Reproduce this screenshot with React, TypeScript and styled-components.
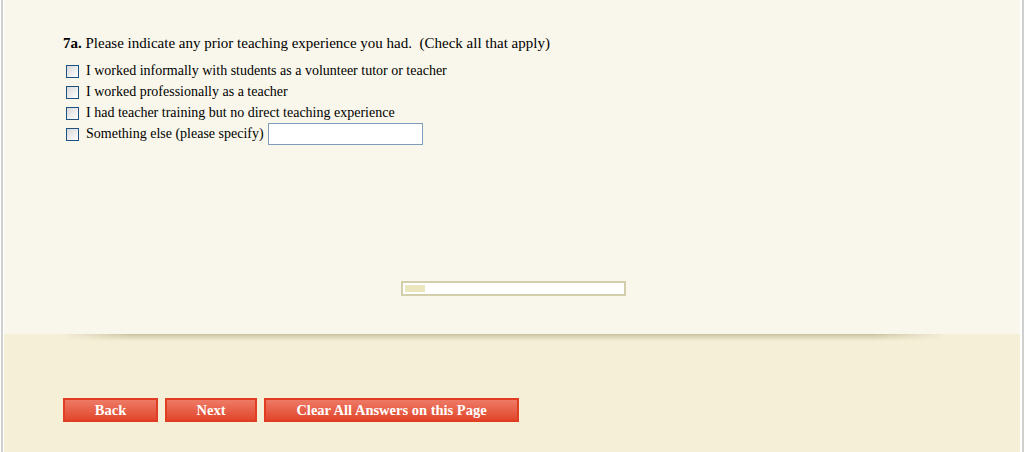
import styled, { createGlobalStyle } from "styled-components";

const GlobalStyle = createGlobalStyle`
    html, body {
        margin: 0;
        padding: 0;
        background: #ffffff;
    }
    body {
        font-family: "Liberation Serif", "Times New Roman", serif;
        color: #000000;
    }
`;

const Frame = styled.div`
    margin-left: 1px;
    width: 1016px;
    border-left: 2px solid #cfcfcf;
    border-right: 2px solid #cfcfcf;
    padding: 0 2px 0 1px;
    background: #ffffff;
    min-height: 452px;
`;

const QuestionArea = styled.div`
    background: #f9f7eb;
    height: 334px;
    padding: 35px 0 0 59px;
    box-sizing: border-box;
    display: flex;
    flex-direction: column;
`;

const Question = styled.div`
    font-size: 15px;
    line-height: 17px;
    margin-bottom: 11px;
    b {
        font-weight: bold;
    }
`;

const Options = styled.ul`
    list-style: none;
    margin: 0;
    padding: 0 0 0 3px;
    display: flex;
    flex-direction: column;
    gap: 5px;
`;

const Option = styled.li`
    display: flex;
    align-items: center;
    height: 16px;
    font-size: 14px;
`;

const Box = styled.span`
    width: 11px;
    height: 11px;
    border: 1px solid #1c5180;
    background: linear-gradient(135deg, #d8d8d8, #ffffff);
    margin-right: 7px;
    flex-shrink: 0;
`;

const SpecifyInput = styled.input`
    width: 151px;
    height: 18px;
    margin-left: 4px;
    border: 1px solid #7f9db9;
    background: #ffffff;
    padding: 1px;
    font: inherit;
`;

const Progress = styled.div`
    margin: 139px 0 0 338px;
    width: 217px;
    height: 7px;
    border: 2px solid #d3cfad;
    background: #ffffff;
    padding: 2px;
    box-sizing: content-box;
    display: flex;
`;

const ProgressFill = styled.div`
    height: 100%;
    background: #ece6c0;
`;

const ButtonArea = styled.div`
    background: #f5efd7;
    height: 118px;
    display: flex;
    flex-direction: column;
`;

const Shade = styled.div`
    height: 7px;
    margin: 0 76px 0 58px;
    background: linear-gradient(to bottom, rgba(160, 150, 110, 0.5), rgba(220, 210, 170, 0));
    -webkit-mask-image: linear-gradient(to right, transparent, #000 8%, #000 92%, transparent);
    mask-image: linear-gradient(to right, transparent, #000 8%, #000 92%, transparent);
`;

const ButtonRow = styled.div`
    display: flex;
    gap: 7px;
    padding: 57px 0 0 59px;
`;

const NavButton = styled.button<{ $width: number }>`
    width: ${(p) => p.$width}px;
    height: 24px;
    border: 2px solid #e03d22;
    background: linear-gradient(to bottom, #ee7a66, #e1472c);
    color: #ffffff;
    font-family: "Liberation Serif", "Times New Roman", serif;
    font-weight: bold;
    font-size: 14.5px;
    padding: 0;
    cursor: pointer;
`;

export default function App() {
    const options = [
        "I worked informally with students as a volunteer tutor or teacher",
        "I worked professionally as a teacher",
        "I had teacher training but no direct teaching experience",
    ];
    return (
        <Frame>
            <GlobalStyle />
            <QuestionArea>
                <Question>
                    <b>7a.</b> Please indicate any prior teaching experience you had.&nbsp; (Check all that apply)
                </Question>
                <Options>
                    {options.map((o) => (
                        <Option key={o}>
                            <Box />
                            {o}
                        </Option>
                    ))}
                    <Option>
                        <Box />
                        Something else (please specify)
                        <SpecifyInput type="text" />
                    </Option>
                </Options>
                <Progress>
                    <ProgressFill style={{ width: `${(20 / 217) * 100}%` }} />
                </Progress>
            </QuestionArea>
            <ButtonArea>
                <Shade />
                <ButtonRow>
                    <NavButton $width={95}>Back</NavButton>
                    <NavButton $width={92}>Next</NavButton>
                    <NavButton $width={255}>Clear All Answers on this Page</NavButton>
                </ButtonRow>
            </ButtonArea>
        </Frame>
    );
}
